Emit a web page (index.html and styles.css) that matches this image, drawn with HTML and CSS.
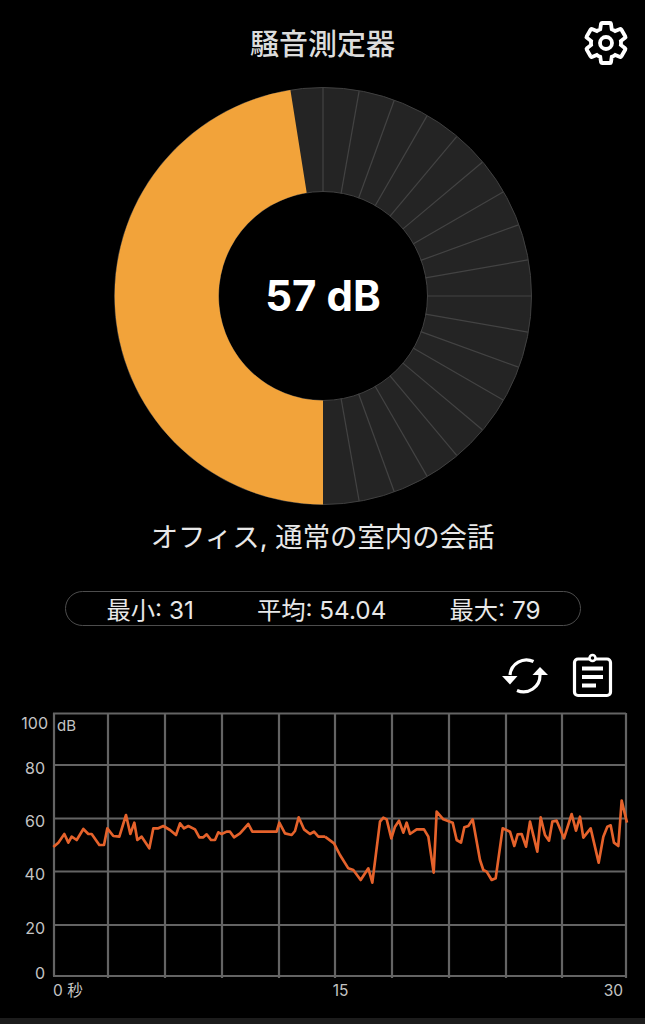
FILE: index.html
```html
<!DOCTYPE html>
<html lang="ja">
<head>
  <meta charset="UTF-8" />
  <title>騒音測定器</title>
  <link rel="stylesheet" href="styles.css">
</head>
<body>

  <header class="top-bar">
    <h1 class="title">騒音測定器</h1>
    <svg class="gear" viewBox="0 0 24 24">
      <path d="M19.43 12.98c.04-.32.07-.64.07-.98s-.03-.66-.07-.98l2.11-1.65c.19-.15.24-.42.12-.64l-2-3.46c-.12-.22-.39-.3-.61-.22l-2.49 1c-.52-.4-1.08-.73-1.69-.98l-.38-2.65C14.46 2.18 14.25 2 14 2h-4c-.25 0-.46.18-.49.42l-.38 2.65c-.61.25-1.17.59-1.69.98l-2.49-1c-.23-.09-.49 0-.61.22l-2 3.46c-.13.22-.07.49.12.64l2.11 1.65c-.04.32-.07.65-.07.98s.03.66.07.98l-2.11 1.65c-.19.15-.24.42-.12.64l2 3.46c.12.22.39.3.61.22l2.49-1c.52.4 1.08.73 1.69.98l.38 2.65c.03.24.24.42.49.42h4c.25 0 .46-.18.49-.42l.38-2.65c.61-.25 1.17-.59 1.69-.98l2.49 1c.23.09.49 0 .61-.22l2-3.46c.12-.22.07-.49-.12-.64l-2.11-1.65z"/>
      <circle cx="12" cy="12" r="3"/>
    </svg>
  </header>

  <!-- Gauge -->
  <svg class="gauge" viewBox="-211 -211 422 422">
    <circle class="ring" r="156.5"/>
    <circle class="ring-edge" r="208.5"/>
    <circle class="ring-edge" r="104.5"/>
    <g class="ticks">
      <line y1="-104" y2="-208"/>
      <line y1="-104" y2="-208" transform="rotate(10)"/>
      <line y1="-104" y2="-208" transform="rotate(20)"/>
      <line y1="-104" y2="-208" transform="rotate(30)"/>
      <line y1="-104" y2="-208" transform="rotate(40)"/>
      <line y1="-104" y2="-208" transform="rotate(50)"/>
      <line y1="-104" y2="-208" transform="rotate(60)"/>
      <line y1="-104" y2="-208" transform="rotate(70)"/>
      <line y1="-104" y2="-208" transform="rotate(80)"/>
      <line y1="-104" y2="-208" transform="rotate(90)"/>
      <line y1="-104" y2="-208" transform="rotate(100)"/>
      <line y1="-104" y2="-208" transform="rotate(110)"/>
      <line y1="-104" y2="-208" transform="rotate(120)"/>
      <line y1="-104" y2="-208" transform="rotate(130)"/>
      <line y1="-104" y2="-208" transform="rotate(140)"/>
      <line y1="-104" y2="-208" transform="rotate(150)"/>
      <line y1="-104" y2="-208" transform="rotate(160)"/>
      <line y1="-104" y2="-208" transform="rotate(170)"/>
    </g>
    <path class="level" d="M0 208.5A208.5 208.5 0 0 1 -32.6 -205.9L-16.3 -103.2A104.5 104.5 0 0 0 0 104.5Z"/>
    <text class="reading" y="15" text-anchor="middle">57 dB</text>
  </svg>

  <p class="description">オフィス, 通常の室内の会話</p>

  <div class="stats">
    <span>最小: 31</span>
    <span>平均: 54.04</span>
    <span>最大: 79</span>
  </div>

  <div class="actions">
    <svg class="icon-refresh" viewBox="-24 -24 48 48">
      <path class="icon-line" d="M8.5 -14.5A16.5 16.5 0 0 0 -15 -1"/>
      <path class="icon-fill" d="M-23 0H-7.5L-15 8.5Z"/>
      <path class="icon-line" d="M-8 14.5A16.5 16.5 0 0 0 15 -1"/>
      <path class="icon-fill" d="M7.5 -1H23L15 -9Z"/>
    </svg>
    <svg class="icon-clip" viewBox="0 0 44 48">
      <rect class="icon-line" x="3.5" y="7" width="36" height="36.5" rx="3.5"/>
      <circle class="icon-clip-ring" cx="21.5" cy="6" r="3"/>
      <path class="icon-bars" d="M11 16.5H32M11 25H32M11 33.500H25"/>
    </svg>
  </div>

  <!-- History chart -->
  <svg class="chart" viewBox="0 0 645 318">
    <g class="grid">
      <path d="M53 13.500H626M53 65H626M53 118.500H626M53 171.500H626M53 225H626M53 276H626"/>
      <path d="M54 13V276M108 13V278M165 13V278M222 13V278M279 13V278M335 13V278M392 13V278M449 13V278M506 13V278M562 13V278M626 13V278"/>
    </g>
    <g class="scale">
      <text x="48" y="29" text-anchor="end">100</text>
      <text x="45" y="74" text-anchor="end">80</text>
      <text x="45" y="127" text-anchor="end">60</text>
      <text x="45" y="180" text-anchor="end">40</text>
      <text x="45" y="234" text-anchor="end">20</text>
      <text x="45" y="279" text-anchor="end">0</text>
      <text class="unit" x="57" y="31">dB</text>
      <text class="time" x="53" y="296">0 秒</text>
      <text class="time" x="340.500" y="296" text-anchor="middle">15</text>
      <text class="time" x="623" y="296" text-anchor="end">30</text>
    </g>
    <g transform="scale(0.33333)">
      <polyline class="trace" points="160,441 175,428 193,402 205,428 215,410 230,420 250,387 265,402 275,402 298,435 312,435 322,385 340,408 358,410 378,345 391,402 403,368 412,420 425,410 448,445 460,385 475,385 490,378 510,390 528,405 540,370 552,385 565,378 585,388 598,412 610,412 620,403 633,420 645,420 655,397 665,402 680,395 690,395 702,412 720,400 745,372 757,395 830,395 838,368 855,400 875,405 885,393 896,352 912,388 930,402 942,395 955,410 975,410"/>
      <polyline class="trace" transform="translate(960 0)" points="15,410 42,430 60,465 85,505 100,510 122,540 145,505 157,548 180,365 190,353 200,358 214,415 225,380 237,362 250,398 260,368 270,402 290,388 312,388 325,410 341,518 350,335 370,358 398,368 410,420 423,428 433,382 445,378 458,358 480,480 490,510 500,515 515,540 527,535 548,385 570,395 583,438 593,403 605,402 618,440 630,365 652,455 662,352 675,405 687,422 697,365 710,362 732,415 755,342 768,392 780,350 790,413 812,385 836,488 850,410 862,380 872,376 882,428 895,438 905,302 921,368"/>
    </g>
  </svg>

  <div class="bottom-strip"></div>

</body>
</html>
```

FILE: styles.css
```css
html, body { height: 100%; }
body { background: #000; color: #fff; font-family: Inter, "Noto Sans CJK JP", sans-serif; margin: 0; overflow: hidden; display: flex; flex-direction: column; align-items: center; }

.top-bar { width: 100%; height: 85px; flex: none; display: flex; justify-content: center; position: relative; }
.title { margin: 0; padding-top: 21px; font-size: 29px; line-height: 42px; font-weight: 500; color: #dcdcdc; font-family: "Noto Sans CJK JP", sans-serif; }
.gear { position: absolute; right: 15px; top: 19px; width: 48px; height: 48px; }
.gear path, .gear circle { fill: none; stroke: #fff; stroke-width: 1.9; }

.gauge { display: block; flex: none; width: 422px; height: 422px; }
.ring { fill: none; stroke: #242424; stroke-width: 104; }
.ring-edge { fill: none; stroke: #404040; stroke-width: 1; }
.ticks line { stroke: #434343; stroke-width: 1.2; }
.level { fill: #f2a33a; }
.reading { fill: #fff; font-size: 42px; font-weight: 700; font-family: Inter, sans-serif; }

.description { margin: 12px 0 0; font-size: 27.400px; line-height: 36px; font-weight: 400; color: #e8e8e8; white-space: nowrap; }

.stats { box-sizing: border-box; width: 516px; height: 35px; margin-top: 36px; flex: none; border: 1px solid #4d4d4d; border-radius: 18px; display: flex; justify-content: space-between; align-items: center; padding: 0 39px 0 41px; font-size: 24.300px; font-weight: 400; color: #e8e8e8; white-space: nowrap; }

.actions { width: 100%; height: 74px; flex: none; display: flex; justify-content: flex-end; align-items: flex-start; gap: 22px; padding: 26px 30px 0 0; box-sizing: border-box; }
.icon-refresh { width: 48px; height: 48px; }
.icon-clip { width: 44px; height: 48px; }
.icon-line { fill: none; stroke: #fff; stroke-width: 3.200; }
.icon-fill { fill: #fff; }
.icon-clip-ring { fill: #000; stroke: #fff; stroke-width: 2.500; }
.icon-bars { fill: none; stroke: #fff; stroke-width: 3.800; }

.chart { display: block; flex: none; width: 645px; height: 318px; }
.grid path { fill: none; stroke: #646464; stroke-width: 2.200; }
.scale text { fill: #c4c4c4; font-size: 16px; font-family: Inter, "Noto Sans CJK JP", sans-serif; }
.scale .unit { font-size: 15px; }
.scale .time { font-size: 15.500px; }
.trace { fill: none; stroke: #e5622b; stroke-width: 8; stroke-linejoin: round; }

.bottom-strip { flex: 1; width: 100%; background: #1c1c1c; }
```
